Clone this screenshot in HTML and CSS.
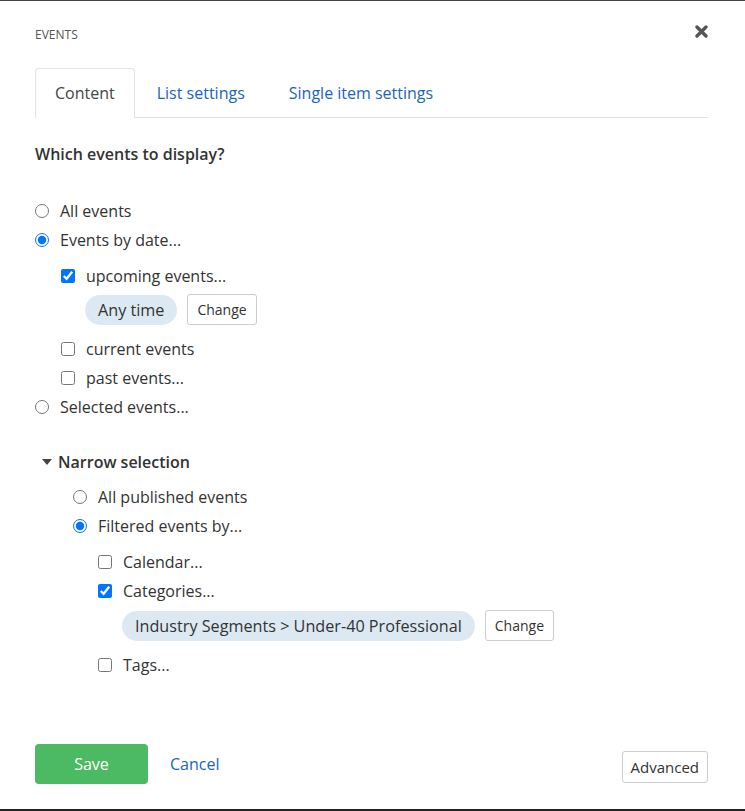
FILE: index.html
```html
<!DOCTYPE html>
<html lang="en">
<head>
    <meta charset="UTF-8">
    <meta name="viewport" content="width=device-width, initial-scale=1.0">
    <title>Events</title>
    <link rel="stylesheet" href="styles.css">
</head>
<body>
    <div class="dialog">
        <div class="dialog-head">
            <span class="dialog-title">EVENTS</span>
            <svg class="close" width="13" height="13" viewBox="0 0 13 13">
                <path d="M2 2 L11 11 M11 2 L2 11" stroke="#555" stroke-width="3.4" stroke-linecap="round"/>
            </svg>
        </div>

        <ul class="tabs">
            <li class="tab active">Content</li>
            <li class="tab">List settings</li>
            <li class="tab">Single item settings</li>
        </ul>

        <div class="section-title">Which events to display?</div>

        <div class="options">
            <label class="opt"><input type="radio" name="which"> All events</label>
            <label class="opt"><input type="radio" name="which" checked> Events by date...</label>
            <div class="sub">
                <label class="opt"><input type="checkbox" checked> upcoming events...</label>
                <div class="chosen">
                    <span class="pill">Any time</span>
                    <button type="button" class="btn-small">Change</button>
                </div>
                <label class="opt"><input type="checkbox"> current events</label>
                <label class="opt"><input type="checkbox"> past events...</label>
            </div>
            <label class="opt"><input type="radio" name="which"> Selected events...</label>
        </div>

        <div class="narrow">
            <div class="narrow-title"><span class="caret"></span>Narrow selection</div>
            <div class="narrow-body">
                <label class="opt"><input type="radio" name="narrow"> All published events</label>
                <label class="opt"><input type="radio" name="narrow" checked> Filtered events by...</label>
                <div class="sub sub-narrow">
                    <label class="opt"><input type="checkbox"> Calendar...</label>
                    <label class="opt"><input type="checkbox" checked> Categories...</label>
                    <div class="chosen">
                        <span class="pill">Industry Segments &gt; Under-40 Professional</span>
                        <button type="button" class="btn-small">Change</button>
                    </div>
                    <label class="opt"><input type="checkbox"> Tags...</label>
                </div>
            </div>
        </div>

        <div class="footer">
            <button type="button" class="btn-save">Save</button>
            <a href="#" class="cancel">Cancel</a>
            <button type="button" class="btn-small btn-advanced">Advanced</button>
        </div>
    </div>
</body>
</html>
```

FILE: styles.css
```css
body {
    margin: 0;
    font-family: 'Open Sans', sans-serif;
    color: #333;
    background-color: #ffffff;
}
.dialog {
    box-sizing: border-box;
    height: 811px;
    border-top: 1px solid #444;
    border-bottom: 2px solid #222;
    padding: 0 37px 0 35px;
    display: flex;
    flex-direction: column;
}
.dialog-head {
    display: flex;
    justify-content: space-between;
    align-items: center;
    height: 60px;
}
.dialog-title {
    font-size: 12px;
    color: #555;
    margin-top: 7px;
}
.close {
    margin-top: 1px;
}
.tabs {
    list-style: none;
    margin: 7px 0 0;
    padding: 0;
    display: flex;
    border-bottom: 1px solid #e2e2e2;
}
.tab {
    padding: 0 21px;
    height: 48px;
    line-height: 48px;
    font-size: 16px;
    color: #1a64c0;
    border: 1px solid transparent;
    border-bottom: none;
    border-radius: 4px 4px 0 0;
    margin-bottom: -1px;
}
.tab.active {
    color: #444;
    border-color: #e2e2e2;
    background-color: #fff;
    height: 49px;
    padding: 0 19px;
}
.section-title {
    font-size: 16px;
    font-weight: 600;
    margin-top: 25px;
    margin-bottom: 31px;
}
.opt {
    display: flex;
    align-items: center;
    height: 29px;
    font-size: 16px;
    color: #333;
}
.opt input {
    margin: 0 11px 0 0;
    width: 14px;
    height: 14px;
}
.sub {
    margin: 7px 0 0 26px;
}
.chosen {
    display: flex;
    align-items: center;
    gap: 10px;
    margin: 4px 0 9px 24px;
}
.pill {
    background-color: #dce9f3;
    border-radius: 15px;
    padding: 0 13px;
    height: 30px;
    line-height: 30px;
    font-size: 16.2px;
}
.btn-small {
    font-family: 'Open Sans', sans-serif;
    font-size: 14px;
    color: #333;
    background-color: #fff;
    border: 1px solid #ccc;
    border-radius: 3px;
    height: 31px;
    padding: 0 9px;
}
.narrow {
    margin-top: 29px;
}
.narrow-title {
    display: flex;
    align-items: center;
    font-size: 16px;
    font-weight: 600;
    margin-left: 7px;
    height: 24px;
}
.caret {
    width: 0;
    height: 0;
    border-left: 5px solid transparent;
    border-right: 5px solid transparent;
    border-top: 6px solid #444;
    margin-right: 6px;
}
.narrow-body {
    margin: 8px 0 0 38px;
}
.sub-narrow {
    margin: 7px 0 0 25px;
}
.sub-narrow .chosen {
    margin-top: 5px;
    margin-bottom: 9px;
}
.footer {
    margin-top: auto;
    margin-bottom: 25px;
    display: flex;
    align-items: center;
}
.btn-save {
    font-family: 'Open Sans', sans-serif;
    width: 113px;
    height: 40px;
    background-color: #4cb963;
    color: white;
    border: none;
    border-radius: 4px;
    font-size: 16px;
}
.cancel {
    margin-left: 22px;
    color: #1a64c0;
    text-decoration: none;
    font-size: 16px;
}
.btn-advanced {
    margin-left: auto;
    margin-top: 5px;
    height: 32px;
    font-size: 15px;
    padding: 0 8px;
}
```
